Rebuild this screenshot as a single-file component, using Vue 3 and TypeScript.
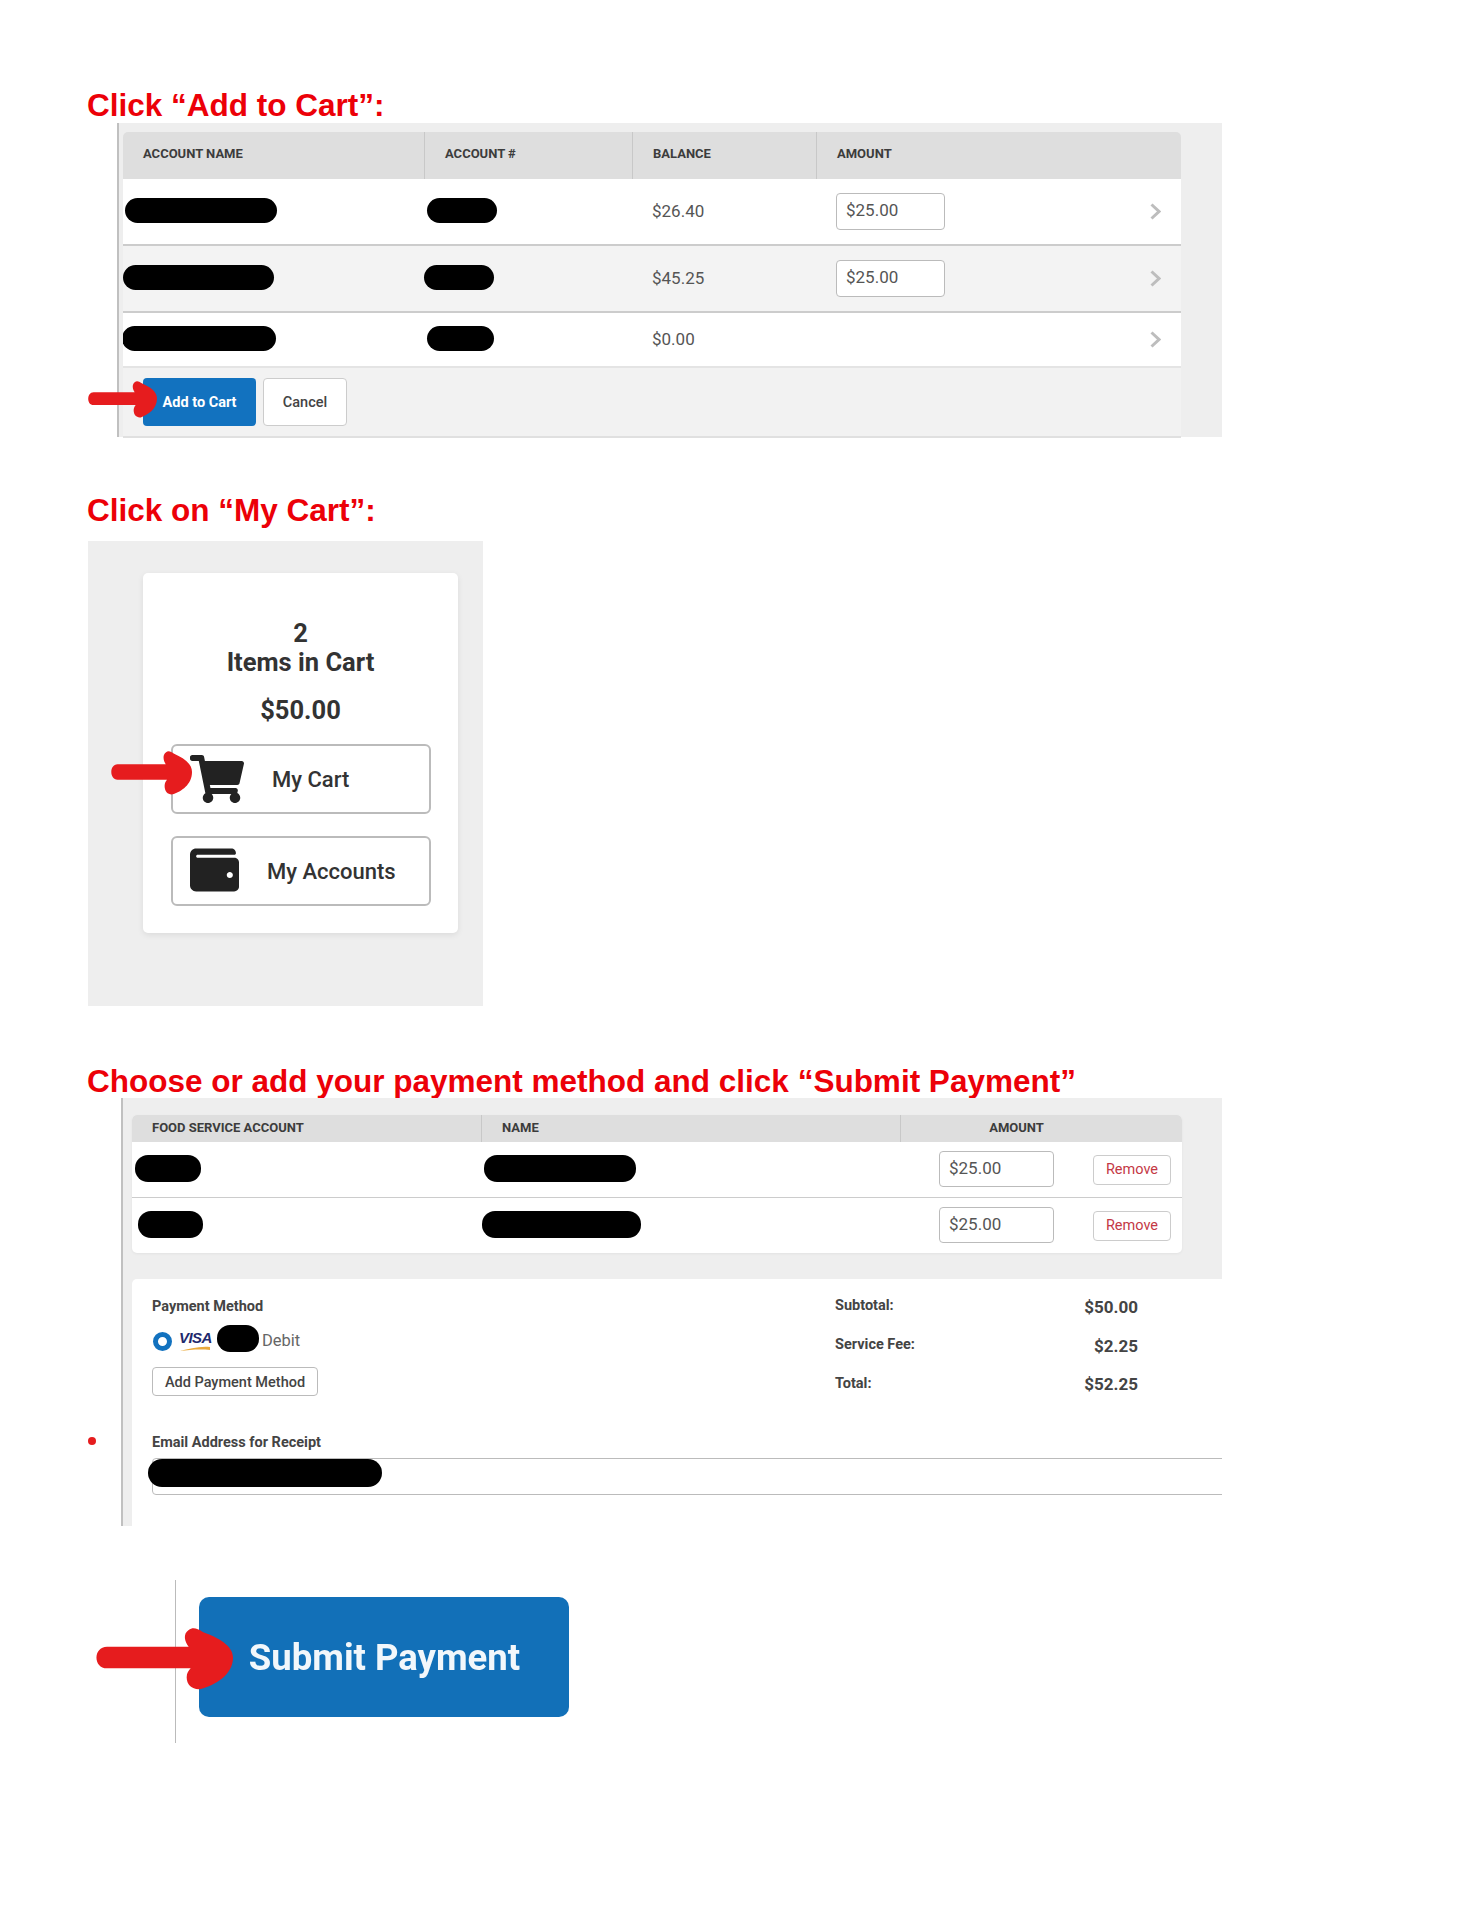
<template>
  <div class="page">
    <h2 class="step">Click “Add to Cart”:</h2>
    <div class="panel accounts-panel">
      <svg class="arrow arrow-add" viewBox="0 0 136 63" preserveAspectRatio="none"><path :d="arrowPath" /></svg>
      <div class="accounts">
        <div class="acc-row acc-head">
          <div class="th">Account Name</div>
          <div class="th">Account #</div>
          <div class="th">Balance</div>
          <div class="th">Amount</div>
        </div>
        <div v-for="row in accounts" :key="row.balance" class="acc-row acc-body" :class="row.cls">
          <div class="cell"><span class="blob" :style="blobStyle(row.name)"></span></div>
          <div class="cell"><span class="blob" :style="blobStyle(row.num)"></span></div>
          <div class="cell money">{{ row.balance }}</div>
          <div class="cell amount-cell">
            <div v-if="row.amount" class="field acc-field">{{ row.amount }}</div>
            <svg class="chev" viewBox="0 0 11 17"><path d="M1.500 1.500 9 8.500l-7.500 7" /></svg>
          </div>
        </div>
        <div class="acc-foot">
          <button class="btn primary">Add to Cart</button>
          <button class="btn plain">Cancel</button>
        </div>
      </div>
    </div>

    <h2 class="step step-2">Click on “My Cart”:</h2>
    <div class="cart-panel">
      <svg class="arrow arrow-cart" viewBox="0 0 136 63" preserveAspectRatio="none"><path :d="arrowPath" /></svg>
      <div class="cart-card">
        <div class="cart-count">2<br />Items in Cart</div>
        <div class="cart-total">$50.00</div>
        <button class="nav-btn">
          <svg class="cart-icon" viewBox="0 0 576 512"><path d="M528.12 301.319l47.273-208C578.806 78.301 567.391 64 551.99 64H159.208l-9.166-44.81C147.758 8.021 137.93 0 126.529 0H24C10.745 0 0 10.745 0 24v16c0 13.255 10.745 24 24 24h69.883l70.248 343.435C147.325 417.1 136 435.222 136 456c0 30.928 25.072 56 56 56s56-25.072 56-56c0-15.674-6.447-29.835-16.824-40h209.647C430.447 426.165 424 440.326 424 456c0 30.928 25.072 56 56 56s56-25.072 56-56c0-22.172-12.888-41.332-31.579-50.405l5.517-24.276c3.413-15.018-8.002-29.319-23.403-29.319H218.117l-6.545-32h293.145c11.206 0 20.92-7.754 23.403-18.681z" /></svg>
          <span class="nav-label cart-label">My Cart</span>
        </button>
        <button class="nav-btn">
          <svg class="wallet-icon" viewBox="0 32 512 448"><path d="M461.2 128H80c-8.84 0-16-7.16-16-16s7.16-16 16-16h384c8.84 0 16-7.160 16-16 0-26.51-21.49-48-48-48H64C28.65 32 0 60.65 0 96v320c0 35.35 28.65 64 64 64h397.2c28.02 0 50.8-21.53 50.8-48V176c0-26.47-22.78-48-50.8-48zM416 340c-17.67 0-32-14.33-32-32s14.33-32 32-32 32 14.33 32 32-14.33 32-32 32z" /></svg>
          <span class="nav-label wallet-label">My Accounts</span>
        </button>
      </div>
    </div>

    <h2 class="step step-3">Choose or add your payment method and click “Submit Payment”</h2>
    <div class="panel pay-panel">
      <span class="stray-dot"></span>
      <div class="items">
        <div class="item-row item-head">
          <div class="th">Food Service Account</div>
          <div class="th">Name</div>
          <div class="th th-center">Amount</div>
        </div>
        <div v-for="item in items" :key="item.num.left" class="item-row item-body">
          <div class="cell"><span class="blob tall" :style="blobStyle(item.num)"></span></div>
          <div class="cell"><span class="blob tall" :style="blobStyle(item.name)"></span></div>
          <div class="cell item-amount">
            <div class="field item-field">$25.00</div>
            <button class="remove">Remove</button>
          </div>
        </div>
      </div>

      <div class="pay-card">
        <div class="pay-top">
          <div class="pay-left">
            <div class="label">Payment Method</div>
            <div class="method">
              <span class="radio"></span>
              <span class="visa">VISA
                <svg class="swoosh" viewBox="0 0 31 5"><path d="M1 5C10 3 20 0 31 1v3C20 3 10 4 1 5z" /></svg>
              </span>
              <span class="blob card-blob"></span>
              <span class="debit">Debit</span>
            </div>
            <button class="add-method">Add Payment Method</button>
          </div>
          <div class="summary">
            <div v-for="line in totals" :key="line.label" class="sum-row">
              <span class="label">{{ line.label }}</span>
              <span class="sum-value">{{ line.value }}</span>
            </div>
          </div>
        </div>
        <div class="label email-label">Email Address for Receipt</div>
        <div class="email-field"><span class="blob email-blob"></span></div>
      </div>
    </div>

    <div class="submit-wrap">
      <svg class="arrow arrow-submit" viewBox="0 0 136 63" preserveAspectRatio="none"><path :d="arrowPath" /></svg>
      <button class="submit"><span class="submit-text">Submit Payment</span></button>
    </div>
  </div>
</template>

<script setup lang="ts">
interface Blob {
  left: number;
  width: number;
}

interface AccountRow {
  name: Blob;
  num: Blob;
  balance: string;
  amount?: string;
  cls: string;
}

const arrowPath =
  'M11 19H92C88 14 86 6 92 2C96-1 100 0 106 4C122 10 136 18 136 30C136 48 118 58 104 62C96 63 90 58 90 50C90 46 92 43 94 41H11C-3 41-3 19 11 19Z';

const accounts: AccountRow[] = [
  { name: { left: 2, width: 152 }, num: { left: 3, width: 70 }, balance: '$26.40', amount: '$25.00', cls: 'r1' },
  { name: { left: 0, width: 151 }, num: { left: 0, width: 70 }, balance: '$45.25', amount: '$25.00', cls: 'r2' },
  { name: { left: -1, width: 154 }, num: { left: 3, width: 67 }, balance: '$0.00', cls: 'r3' },
];

const items = [
  { num: { left: 3, width: 66 }, name: { left: 3, width: 152 } },
  { num: { left: 6, width: 65 }, name: { left: 1, width: 159 } },
];

const totals = [
  { label: 'Subtotal:', value: '$50.00' },
  { label: 'Service Fee:', value: '$2.25' },
  { label: 'Total:', value: '$52.25' },
];

function blobStyle(b: Blob) {
  return { marginLeft: b.left + 'px', width: b.width + 'px' };
}
</script>

<style>
html,
body {
  background: #fff;
}
</style>

<style scoped>
.page {
  position: relative;
  height: 1920px;
  box-sizing: border-box;
  padding: 87px 0 0 87px;
  font-family: Roboto, "Liberation Sans", sans-serif;
  color: #444;
  overflow: hidden;
}

button {
  font-family: inherit;
  padding: 0;
  cursor: pointer;
}

.step {
  margin: 0;
  font-family: "Liberation Sans", Arial, sans-serif;
  font-size: 31.5px;
  line-height: 36px;
  font-weight: 700;
  color: #ec0008;
  white-space: nowrap;
}

.step-2 {
  margin: 55px 0 13px;
}

.step-3 {
  margin: 57px 0 -1px;
}

.arrow {
  position: absolute;
  z-index: 2;
  fill: #e61c1e;
  overflow: visible;
}

.arrow-add {
  left: -31px;
  top: 258px;
  width: 69px;
  height: 37px;
}

.arrow-cart {
  left: 23px;
  top: 210px;
  width: 81px;
  height: 44px;
}

.arrow-submit {
  left: -80px;
  top: 48px;
  width: 137px;
  height: 62px;
}

.panel {
  position: relative;
  box-sizing: border-box;
  background: #eee;
  border-left: 2px solid #c0c0c0;
}

.accounts-panel {
  margin-left: 30px;
  width: 1105px;
  height: 314px;
  padding: 9px 41px 0 4px;
}

.accounts {
  border-radius: 5px 5px 0 0;
  overflow: hidden;
  border-bottom: 2px solid #e0e0e0;
}

.acc-row {
  display: grid;
  grid-template-columns: 301px 208px 184px 1fr;
  box-sizing: border-box;
}

.acc-head {
  height: 47px;
}

.th {
  display: flex;
  align-items: center;
  padding: 0 0 5px 20px;
  background: #dedede;
  border-left: 1px solid #c8c8c8;
  font-size: 13px;
  font-weight: 700;
  text-transform: uppercase;
  color: #3c3c3c;
}

.th:first-child {
  border-left: 0;
}

.item-head .th {
  padding-bottom: 3px;
}

.item-head .th-center {
  justify-content: center;
  padding: 0 50px 3px 0;
}

.acc-body {
  height: 67px;
  border-bottom: 2px solid #ccc;
}

.r1 {
  background: #fff;
}

.r2 {
  background: #f3f3f3;
}

.r3 {
  height: 55px;
  background: #fff;
  border-bottom-color: #e4e4e4;
}

.cell {
  display: flex;
  align-items: center;
  min-width: 0;
}

.money {
  padding: 0 0 2px 20px;
  font-size: 17px;
  color: #555;
}

.amount-cell {
  padding: 0 20px 0 20px;
}

.blob {
  display: block;
  flex: none;
  height: 25px;
  margin-bottom: 2px;
  border-radius: 13px;
  background: #000;
}

.blob.tall {
  height: 27px;
}

.field {
  box-sizing: border-box;
  display: flex;
  align-items: center;
  background: #fff;
  border: 1.5px solid #bbb;
  border-radius: 4px;
  font-size: 17px;
  color: #555;
}

.acc-field {
  width: 109px;
  height: 37px;
  padding: 0 0 2px 9px;
  margin-bottom: 1px;
}

.chev {
  width: 11px;
  height: 17px;
  margin: 0 0 1px auto;
  fill: none;
  stroke: #bdbdbd;
  stroke-width: 3;
}

.acc-foot {
  display: flex;
  gap: 7px;
  height: 68px;
  padding: 10px 0 0 20px;
  box-sizing: border-box;
  background: #f2f2f2;
}

.btn {
  height: 48px;
  border-radius: 4px;
  font-size: 14.5px;
}

.primary {
  width: 113px;
  border: 0;
  background: #1272bf;
  color: #fff;
  font-weight: 700;
}

.plain {
  width: 84px;
  border: 1.5px solid #ccc;
  background: #fff;
  color: #444;
  font-weight: 500;
}

.cart-panel {
  position: relative;
  margin-left: 1px;
  width: 395px;
  height: 465px;
  box-sizing: border-box;
  padding: 32px 0 0 55px;
  background: #eee;
}

.cart-card {
  box-sizing: border-box;
  width: 315px;
  height: 360px;
  padding: 46px 28px 0;
  background: #fff;
  border-radius: 5px;
  box-shadow: 0 2px 6px rgba(0, 0, 0, 0.08);
  text-align: center;
  color: #333;
}

.cart-count {
  font-size: 25.5px;
  line-height: 29px;
  font-weight: 700;
}

.cart-total {
  margin-top: 19px;
  font-size: 25.5px;
  line-height: 29px;
  font-weight: 700;
}

.nav-btn {
  display: flex;
  align-items: center;
  box-sizing: border-box;
  width: 260px;
  height: 70px;
  margin-top: 22px;
  padding-left: 18px;
  background: #fff;
  border: 2px solid #bbb;
  border-radius: 6px;
  color: #2b2b2b;
}

.cart-total + .nav-btn {
  margin-top: 19px;
}

.cart-icon {
  width: 56px;
  height: 48px;
  margin-left: -2px;
  fill: #222;
}

.wallet-icon {
  width: 49px;
  height: 44px;
  margin: -2px 0 0 -1px;
  fill: #222;
}

.nav-label {
  font-size: 22px;
  font-weight: 500;
  color: #333;
}

.cart-label {
  margin-left: 27px;
}

.wallet-label {
  margin-left: 28px;
}

.pay-panel {
  margin-left: 34px;
  width: 1101px;
  height: 428px;
  padding: 17px 40px 0 9px;
}

.stray-dot {
  position: absolute;
  left: -35px;
  top: 339px;
  width: 8px;
  height: 8px;
  border-radius: 50%;
  background: #e61c1e;
}

.items {
  border-radius: 5px;
  overflow: hidden;
  background: #fff;
  box-shadow: 0 1px 3px rgba(0, 0, 0, 0.05);
}

.item-row {
  display: grid;
  grid-template-columns: 349px 419px 1fr;
  box-sizing: border-box;
}

.item-head {
  height: 27px;
}

.item-body {
  height: 56px;
  border-bottom: 1.5px solid #ccc;
}

.item-body:last-child {
  height: 55px;
  border-bottom: 0;
}

.item-amount {
  padding-left: 39px;
}

.item-field {
  width: 115px;
  height: 36px;
  padding: 0 0 2px 9px;
  margin-bottom: 1px;
}

.remove {
  box-sizing: border-box;
  width: 78px;
  height: 30px;
  margin-left: 39px;
  background: #fff;
  border: 1.5px solid #ccc;
  border-radius: 4px;
  font-size: 14.5px;
  color: #c43845;
}

.pay-card {
  box-sizing: border-box;
  height: 247px;
  margin: 26px -40px 0 0;
  padding: 16px 0 0 20px;
  background: #fff;
  border-radius: 5px 0 0 0;
  overflow: hidden;
}

.pay-top {
  display: flex;
  height: 101px;
}

.pay-left {
  width: 683px;
  flex: none;
}

.label {
  padding-top: 2px;
  font-size: 14.5px;
  line-height: 20px;
  font-weight: 700;
  color: #444;
}

.method {
  display: flex;
  align-items: center;
  height: 28px;
  margin-top: 10px;
}

.radio {
  box-sizing: border-box;
  width: 19px;
  height: 19px;
  margin-left: 1px;
  border: 5.5px solid #1272bf;
  border-radius: 50%;
}

.visa {
  position: relative;
  width: 32px;
  margin: -2px 6px 0 7px;
  padding-bottom: 5px;
  font-family: "Liberation Sans", Arial, sans-serif;
  font-size: 15px;
  line-height: 14px;
  font-weight: 700;
  font-style: italic;
  letter-spacing: -0.6px;
  color: #1f2a6d;
}

.swoosh {
  position: absolute;
  left: 0;
  bottom: -1px;
  width: 31px;
  height: 5px;
  fill: #e9a93b;
}

.card-blob {
  width: 42px;
  height: 27px;
  margin: 0 0 5px 0;
}

.debit {
  margin: 0 0 2px 3px;
  font-size: 16.5px;
  color: #666;
}

.add-method {
  display: block;
  box-sizing: border-box;
  width: 166px;
  height: 29px;
  margin-top: 12px;
  padding-top: 1px;
  background: #fff;
  border: 1.5px solid #bbb;
  border-radius: 4px;
  font-size: 14.5px;
  font-weight: 500;
  color: #444;
}

.summary {
  width: 303px;
  margin-top: -9px;
}

.sum-row {
  display: flex;
  justify-content: space-between;
  align-items: center;
  height: 38.7px;
}

.sum-value {
  padding-top: 3px;
  font-size: 17px;
  font-weight: 700;
  color: #444;
}

.email-label {
  margin-top: 35px;
}

.email-field {
  box-sizing: border-box;
  width: 1100px;
  height: 37px;
  margin-top: 5px;
  border: 1.5px solid #bbb;
  border-radius: 4px;
}

.email-blob {
  width: 234px;
  height: 28px;
  margin: 0 0 0 -5px;
  border-radius: 14px;
}

.submit-wrap {
  position: relative;
  margin: 54px 0 0 88px;
  height: 163px;
  box-sizing: border-box;
  padding: 17px 0 0 23px;
  border-left: 1.5px solid #bbb;
}

.submit {
  display: block;
  width: 370px;
  height: 120px;
  border: 0;
  border-radius: 10px;
  background: #1270b8;
  font-size: 36.5px;
  font-weight: 700;
  color: #f2f7fb;
  padding-left: 1px;
}

.submit-text {
  display: inline-block;
  filter: blur(0.7px);
}
</style>
